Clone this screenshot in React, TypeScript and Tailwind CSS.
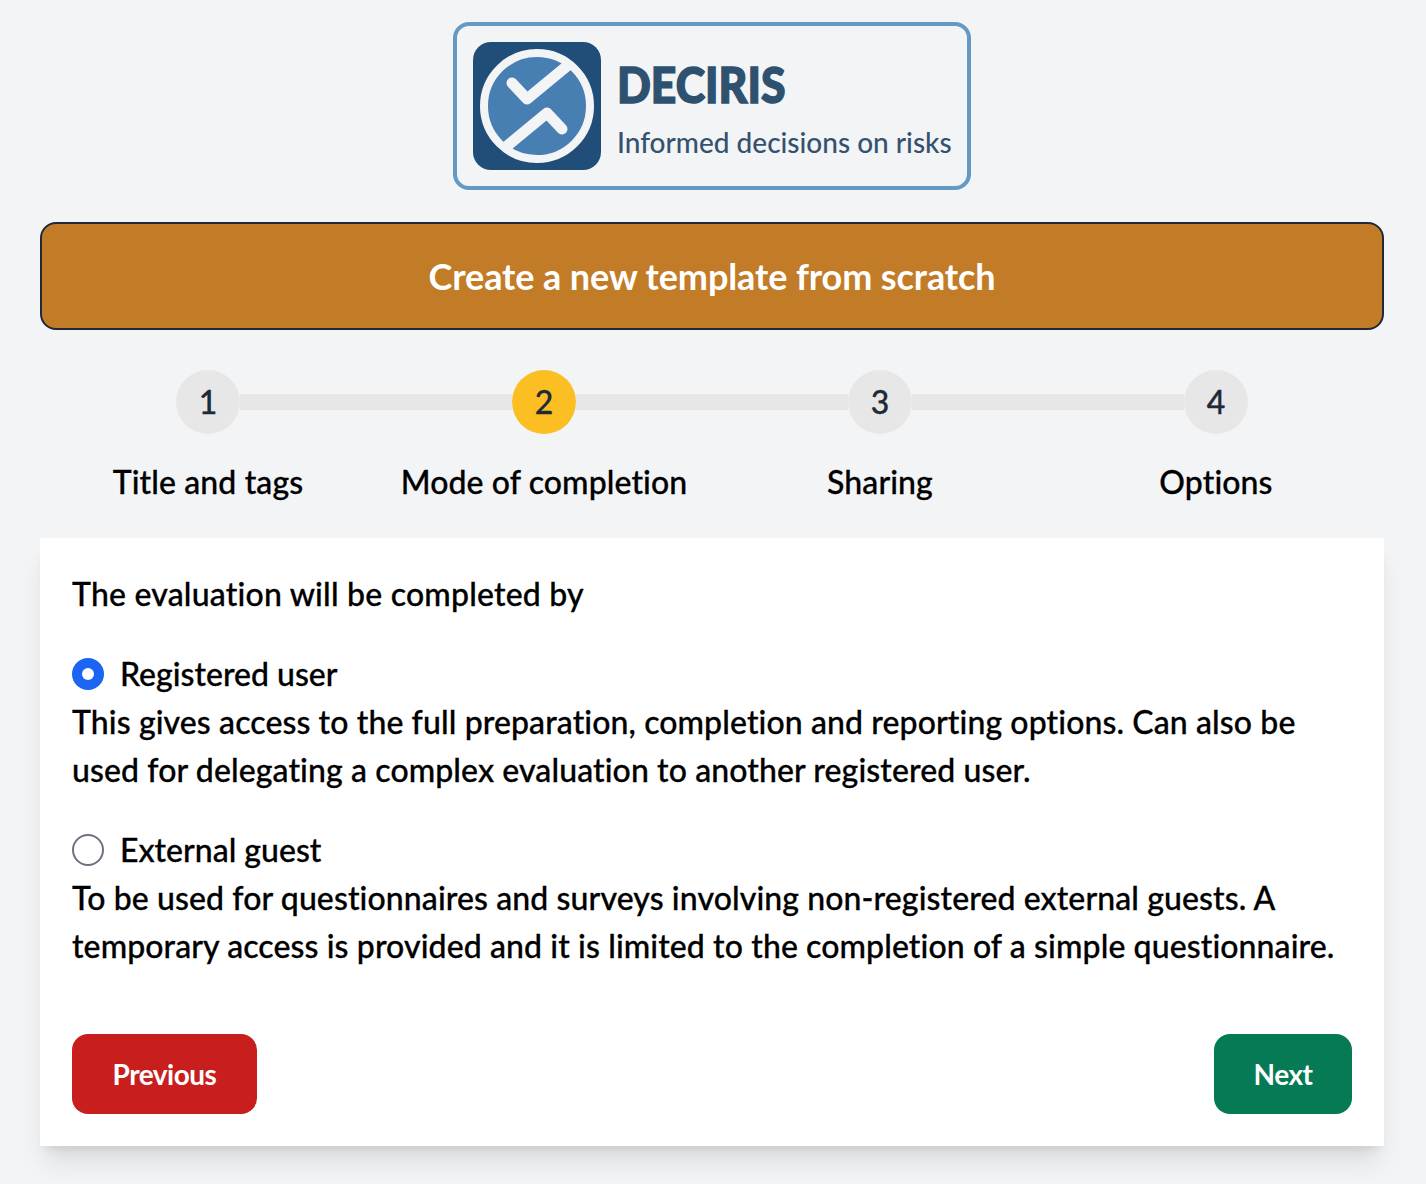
import React from "react";

const steps = ["Title and tags", "Mode of completion", "Sharing", "Options"];

const Logo = () => (
    <svg viewBox="0 0 128 128" className="w-[128px] h-[128px] shrink-0">
        <rect width="128" height="128" rx="18" fill="#204e78" />
        <circle cx="64" cy="64" r="53" fill="#477fb3" stroke="#f3f4f6" strokeWidth="8" />
        {/* check mark and its mirrored twin */}
        <path d="M39 41 L54 57 L94 24" fill="none" stroke="#f3f4f6" strokeWidth="11" strokeLinecap="round" strokeLinejoin="round" />
        <path d="M89 87 L74 71 L34 104" fill="none" stroke="#f3f4f6" strokeWidth="11" strokeLinecap="round" strokeLinejoin="round" />
    </svg>
);

const Radio = ({ checked }: { checked?: boolean }) =>
    checked ? (
        <span className="w-8 h-8 rounded-full bg-[#1c64f2] flex items-center justify-center shrink-0">
            <span className="w-3 h-3 rounded-full bg-white" />
        </span>
    ) : (
        <span className="w-8 h-8 rounded-full border-2 border-[#6b7280] bg-white shrink-0" />
    );

const App: React.FC = () => {
    return (
        <div className="min-h-screen bg-[#f3f4f6] pl-10 pr-[42px] pt-[22px] pb-[38px] text-black font-['Lato',sans-serif] font-medium text-[32px] leading-[48px] tracking-[0.1px] [-webkit-text-stroke:0.3px]">
            {/* Logo */}
            <div className="flex justify-center">
                <div className="flex items-center gap-4 w-[518px] h-[168px] pl-4 border-4 border-[#6499c4] rounded-2xl">
                    <Logo />
                    <div className="flex flex-col pt-2">
                        <span className="font-black text-[50px] leading-[56px] text-[#2f5170] tracking-[0px] origin-left scale-x-[0.89] [-webkit-text-stroke:1.5px_#2f5170]">DECIRIS</span>
                        <span className="mt-2 text-[28px] leading-[44px] text-[#34526f] tracking-[0px] [-webkit-text-stroke:0px]">Informed decisions on risks</span>
                    </div>
                </div>
            </div>

            {/* Title */}
            <div className="mt-8 h-[108px] flex items-center justify-center bg-[#c27c27] border-2 border-[#1f2937] rounded-2xl text-white font-bold text-[36px] tracking-[-0.1px] [-webkit-text-stroke:0px]">
                Create a new template from scratch
            </div>

            {/* Steps */}
            <div className="mt-10 flex items-center px-[136px]">
                {steps.map((s, i) => (
                    <React.Fragment key={s}>
                        <div className={"w-16 h-16 rounded-full flex items-center justify-center shrink-0 text-[#1f2937] " + (i === 1 ? "bg-[#fbbf24]" : "bg-[#e7e7e7]")}>
                            {i + 1}
                        </div>
                        {i < 3 && <div className="flex-1 h-4 bg-[#e7e7e7]" />}
                    </React.Fragment>
                ))}
            </div>
            <div className="mt-6 grid grid-cols-4 text-center">
                {steps.map((s) => (
                    <div key={s}>{s}</div>
                ))}
            </div>

            {/* Card */}
            <div className="mt-8 bg-white p-8 shadow-xl">
                <p className="tracking-[0.2px]">The evaluation will be completed by</p>

                <label className="mt-8 flex items-center gap-4">
                    <Radio checked />
                    <span className="tracking-[0px]">Registered user</span>
                </label>
                <p>
                    This gives access to the full preparation, completion and reporting options. Can also be used for
                    delegating a complex evaluation to another registered user.
                </p>

                <label className="mt-8 flex items-center gap-4">
                    <Radio />
                    <span className="tracking-[0px]">External guest</span>
                </label>
                <p>
                    To be used for questionnaires and surveys involving non-registered external guests. A temporary
                    access is provided and it is limited to the completion of a simple questionnaire.
                </p>

                <div className="mt-16 flex justify-between [-webkit-text-stroke:0px]">
                    <button className="h-20 w-[185px] rounded-2xl bg-[#c81e1e] text-white font-bold text-[28px] tracking-[-0.5px]">Previous</button>
                    <button className="h-20 w-[138px] rounded-2xl bg-[#057a55] text-white font-bold text-[28px] tracking-[-0.5px]">Next</button>
                </div>
            </div>
        </div>
    );
};

export default App;
